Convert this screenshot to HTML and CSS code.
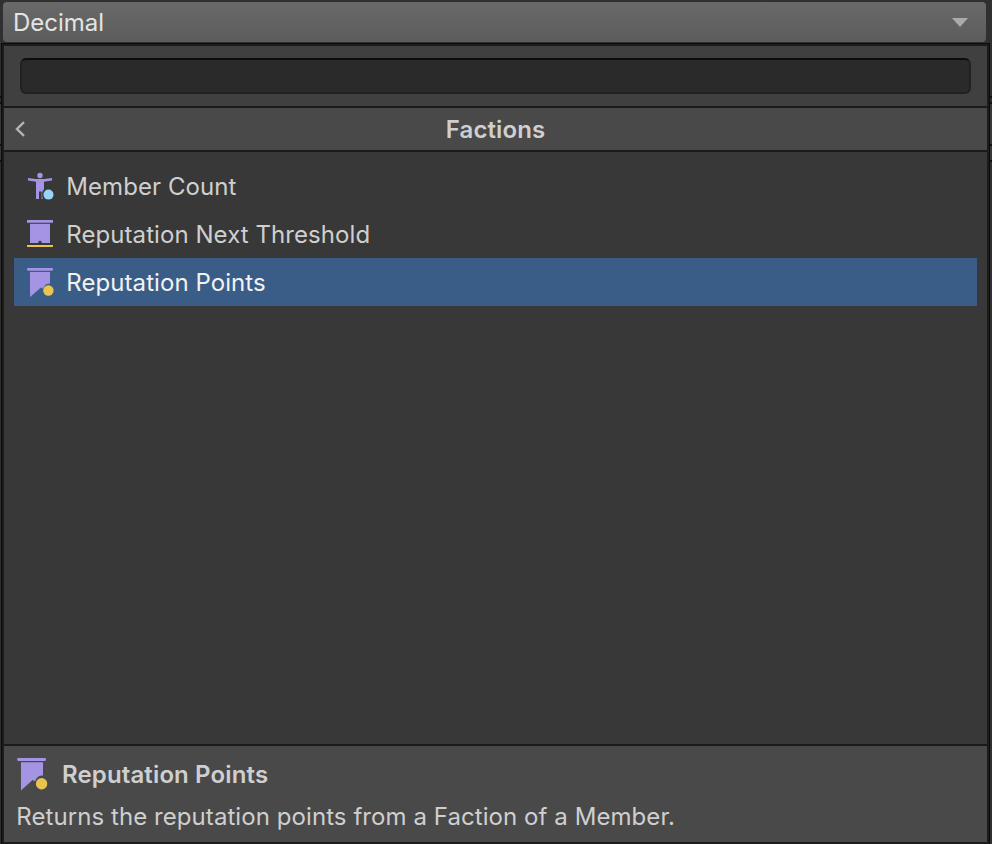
FILE: index.html
```
<!DOCTYPE html>
<html lang="en">
<head>
<meta charset="utf-8">
<title>Decimal</title>
<link rel="stylesheet" href="styles.css">
</head>
<body>
<button class="dropdown"><span>Decimal</span><svg class="arrow" viewBox="0 0 16 9"><path d="M0 0h16L8 9z"/></svg></button>
<main class="popup">
  <div class="search"><input class="field" type="text" aria-label="Search"></div>
  <header class="header">
    <svg class="back" viewBox="0 0 10 16"><path d="M9 1.200 2 8l7 6.800"/></svg>
    <h1 class="title">Factions</h1>
  </header>
  <ul class="list">
    <li class="item">
      <svg class="icon" viewBox="0 0 28 30">
        <circle cx="14" cy="4.500" r="2.700" fill="#a594e3"/>
        <path fill="#a594e3" d="M2 6.900 9.500 8h9L26 6.900v2.600l-8 1.300v7.500q-1.900 2-1.900 5 0 2.500.8 4.700h-1.300v-7.500H13V28h-3V10.800L2 9.500z"/>
        <circle cx="22.500" cy="23.600" r="5" fill="#98d5f4"/>
      </svg>
      <span>Member Count</span>
    </li>
    <li class="item">
      <svg class="icon" viewBox="0 0 28 30">
        <path fill="#a594e3" d="M1 1h26v2.700H1zM4 4.700h20v19.300h-8.300v-1.200h-.8v-1h-1.800v1h-.8v1.200H4z"/>
        <path fill="#e9c550" d="M1 26h26v2H1z"/>
      </svg>
      <span>Reputation Next Threshold</span>
    </li>
    <li class="item selected">
      <svg class="icon" viewBox="0 0 28 30">
        <path fill="#a594e3" d="M2.200 1h23.600a1.300 1.300 0 0 1 0 2.700H2.200a1.300 1.300 0 0 1 0-2.700zM4 4.900h20v11.600a7 7 0 0 0-6.800 5.200l-2.200-1.200L4 30z"/>
        <circle cx="22.400" cy="23.500" r="5.200" fill="#e9c550"/>
      </svg>
      <span>Reputation Points</span>
    </li>
  </ul>
  <footer class="details">
    <div class="heading">
      <svg class="banner" viewBox="0 0 32 32">
        <path fill="#a594e3" d="M2.500 0h26.200a1.400 1.400 0 0 1 0 2.900H2.500a1.400 1.400 0 0 1 0-2.900zM5 4.200h22v13.200a8 8 0 0 0-7.900 5.800l-2.500-1.200L5 32.500z"/>
        <circle cx="25.600" cy="25.700" r="5.700" fill="#e9c550"/>
      </svg>
      <h2 class="name">Reputation Points</h2>
    </div>
    <p class="text">Returns the reputation points from a Faction of a Member.</p>
  </footer>
</main>
</body>
</html>
```
FILE: styles.css
```
* { box-sizing: border-box; }
body {
  margin: 0;
  height: 844px;
  padding: 2px 2px 0 1px;
  overflow: hidden;
  background: linear-gradient(#303030 96px, #111 96px 98px, #303030 98px 102px, #111 102px 104px, #383838 104px 144px, #111 144px 146px, #383838 146px 160px, #111 160px 162px, #303030 162px);
  color: #cfcfcf;
  font: 24px/30px Inter, "Liberation Sans", sans-serif;
  letter-spacing: 0.07px;
}
h1, h2, p, ul { margin: 0; padding: 0; }
svg { display: block; flex: none; overflow: visible; }
.dropdown {
  display: flex;
  align-items: center;
  justify-content: space-between;
  width: 983px;
  height: 40px;
  margin: 0 0 1px 2px;
  padding: 0 18px 0 10px;
  border: 0;
  border-radius: 4px;
  background: linear-gradient(#696969, #5c5c5c);
  color: #e4e4e4;
  font: inherit;
  letter-spacing: 0;
}
.dropdown span { padding-top: 2px; }
.arrow { width: 16px; height: 9px; fill: #aaa; }
.popup {
  display: flex;
  flex-direction: column;
  height: 801px;
  border: 1px solid #0b0b0b;
  border-bottom: 0;
  background: #383838;
  box-shadow: inset 0 0 0 2px #1c1c1c;
  padding: 2px;
}
.search {
  height: 62px;
  padding: 12px 16px;
  background: #404040;
  border-bottom: 2px solid #1a1a1a;
}
.field {
  display: block;
  width: 100%;
  height: 36px;
  border: 2px solid #212121;
  border-top-color: #0d0d0d;
  border-radius: 6px;
  background: #2a2a2a;
  outline: 0;
}
.header {
  display: flex;
  align-items: center;
  height: 44px;
  padding: 0 21px 0 11px;
  background: #494949;
  border-bottom: 2px solid #1a1a1a;
}
.back { width: 10px; height: 16px; fill: none; stroke: #b4b4b4; stroke-width: 2.4; }
.title { flex: 1; padding-top: 2px; font-size: 24px; font-weight: 600; text-align: center; letter-spacing: 0.09px; }
.list { flex: 1; padding: 10px; list-style: none; }
.item {
  display: flex;
  align-items: center;
  gap: 12.300px;
  height: 48px;
  padding-left: 12px;
}
.item span { padding-top: 2px; }
.selected { background: #3a5d87; color: #f2f2f2; }
.icon { width: 28px; height: 30px; }
.details {
  height: 98px;
  padding: 10px 12px;
  border-top: 2px solid #1a1a1a;
  background: #494949;
}
.heading { display: flex; align-items: center; gap: 14px; height: 36px; }
.banner { width: 32px; height: 32px; }
.name { padding-top: 2px; font-size: 24px; font-weight: 600; letter-spacing: 0.13px; }
.text { margin-top: 10px; padding-left: 0.300px; }
```
